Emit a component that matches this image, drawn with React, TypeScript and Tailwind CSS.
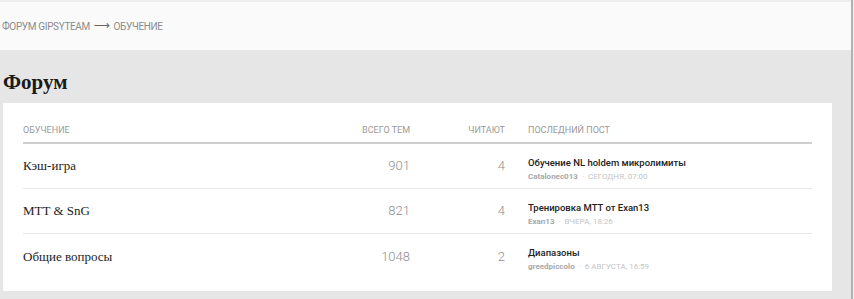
import React from 'react';

const rows = [
  { name: 'Кэш-игра', topics: '901', readers: '4', title: 'Обучение NL holdem микролимиты', author: 'Catalonec013', date: 'Сегодня, 07:00' },
  { name: 'MTT & SnG', topics: '821', readers: '4', title: 'Тренировка MTT от Exan13', author: 'Exan13', date: 'Вчера, 18:26' },
  { name: 'Общие вопросы', topics: '1048', readers: '2', title: 'Диапазоны', author: 'greedpiccolo', date: '6 августа, 16:59' },
];

export default function App() {
  return (
    <div className="flex h-[299px] w-full overflow-hidden bg-[#e6e6e6] font-['Roboto',sans-serif]">
      <div className="flex w-[851px] flex-col">
        <div className="h-[2px] bg-[#eeeeee]" />
        <div className="flex h-[48px] items-center bg-[#fafafa] pl-[2px] text-[10px] uppercase tracking-[-0.35px] text-[#8c8c8c]">
          Форум GipsyTeam <span className="mx-[4px] text-[11px] text-[#666]">⟶</span> Обучение
        </div>
        <h1 className="pl-[3px] pt-[19px] pb-[8px] font-['Liberation_Serif',serif] text-[21px] font-bold leading-[26px] text-[#1a1a1a]">
          Форум
        </h1>
        <div className="mx-[3px] w-[829px] bg-white px-[20px] pb-[12px]">
          <div className="grid h-[41px] grid-cols-[1fr_80px_95px_307px] items-center border-b-2 border-[#cfcfcf] pt-[16px] text-[9px] uppercase text-[#9a9a9a]">
            <div>Обучение</div>
            <div className="text-right">Всего тем</div>
            <div className="text-right">Читают</div>
            <div className="pl-[23px]">Последний пост</div>
          </div>
          {rows.map((r, i) => (
            <div
              key={r.name}
              className={`grid h-[45px] grid-cols-[1fr_80px_95px_307px] items-center ${i < rows.length - 1 ? 'border-b border-[#e8e8e8]' : ''}`}
            >
              <div className="font-['Liberation_Serif',serif] text-[13px] text-[#222]">{r.name}</div>
              <div className="text-right text-[13px] font-light text-[#909090]">{r.topics}</div>
              <div className="text-right text-[13px] font-light text-[#909090]">{r.readers}</div>
              <div className="flex flex-col pl-[23px] pt-[7px]">
                <div className="text-[9.5px] font-medium leading-[14px] text-[#222]">{r.title}</div>
                <div className="text-[8px] leading-[14px]">
                  <span className="font-bold text-[#a8a8a8]">{r.author}</span>
                  <span className="mx-[4px] text-[#ccc]">·</span>
                  <span className="uppercase text-[#c4c4c4]">{r.date}</span>
                </div>
              </div>
            </div>
          ))}
        </div>
      </div>
      <div className="w-[2px] bg-[#b2b2b2]" />
      <div className="flex-1 bg-[#f0f0f0]" />
    </div>
  );
}
